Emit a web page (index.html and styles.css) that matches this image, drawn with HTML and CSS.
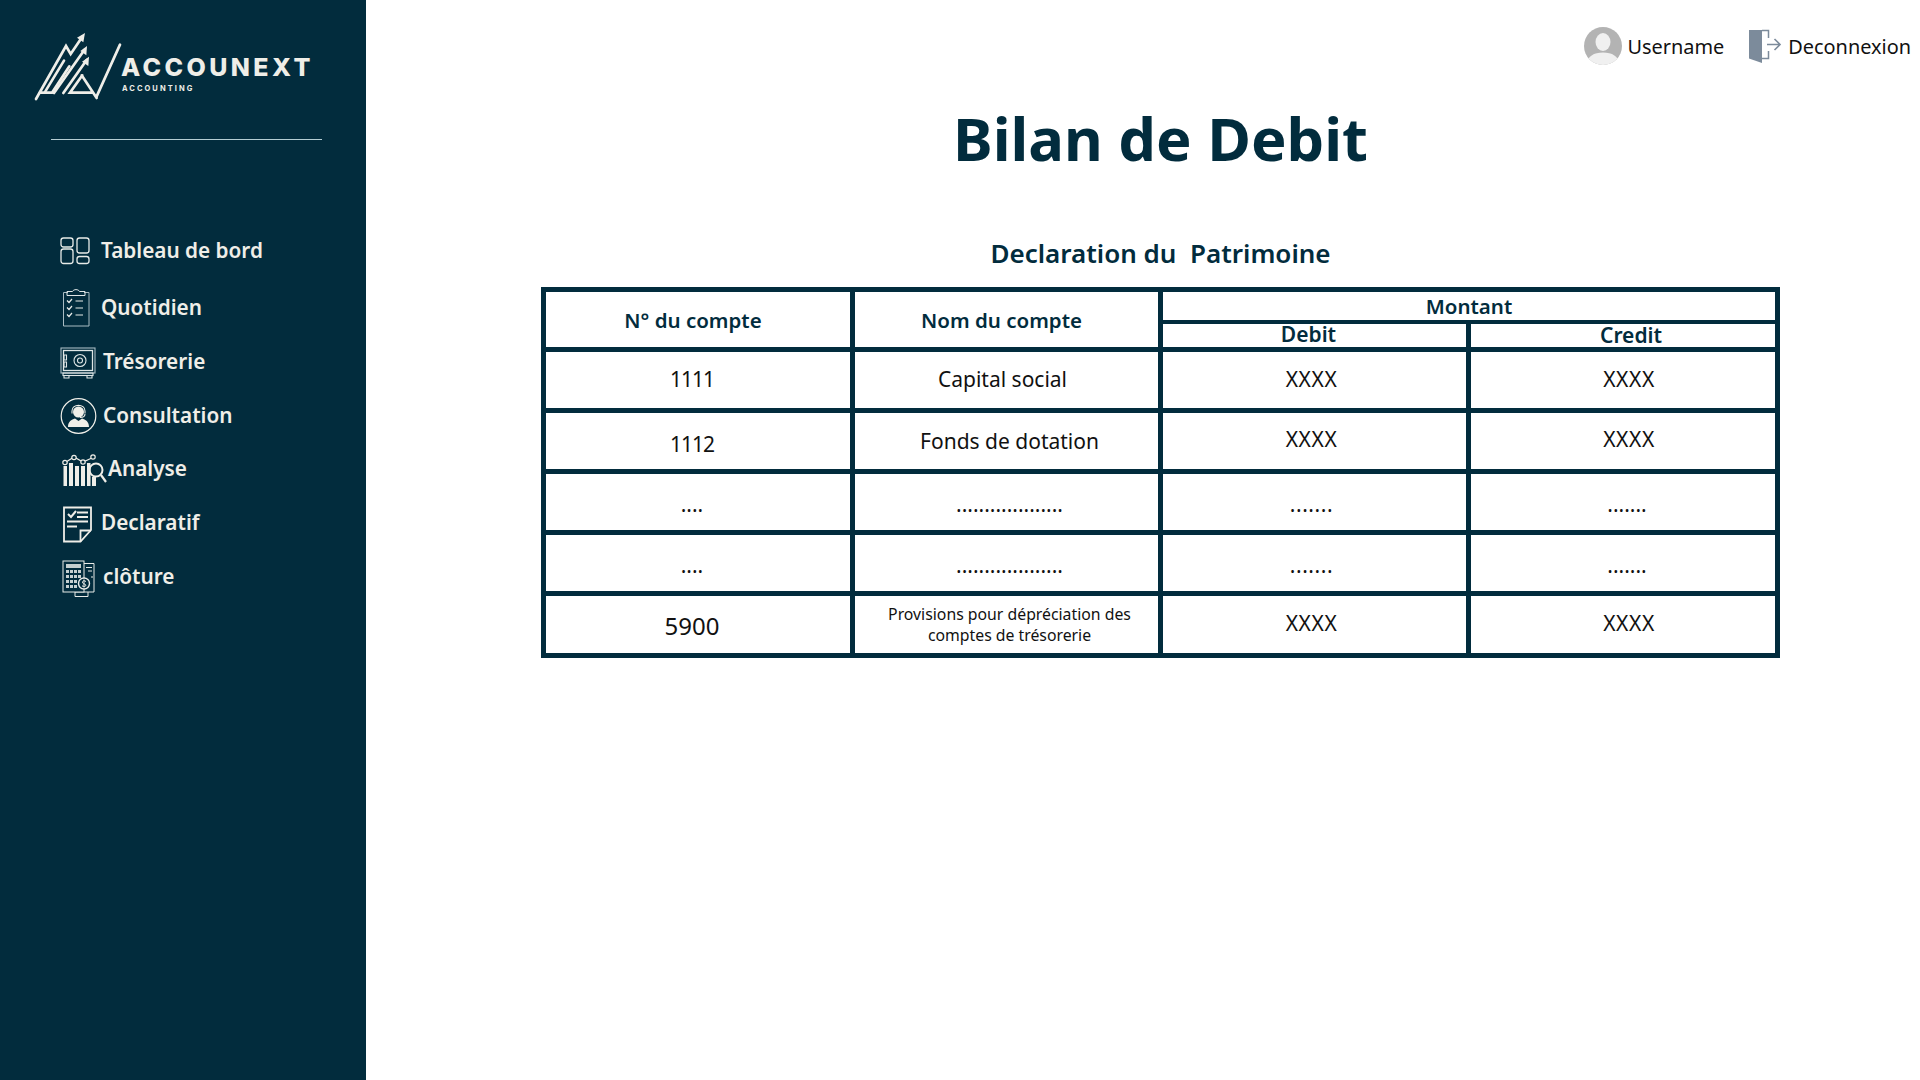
FILE: index.html
```html
<!DOCTYPE html>
<html lang="fr">
<head>
<meta charset="utf-8">
<title>Bilan de Debit</title>
<link rel="stylesheet" href="styles.css">
</head>
<body>
<div class="app">
  <aside class="sidebar">
    <div class="brand">
      <svg class="brand-mark" viewBox="0 0 300 234" fill="none" stroke="#efeee8" stroke-width="8" stroke-linecap="round" stroke-linejoin="miter">
        <path d="M270 50L200 205"/>
        <path d="M157 142L120 194H188M155 142L200 210" />
        <path d="M100 195L170 96"/>
        <path d="M72 195L163 66"/>
        <path d="M18 213L108 54L122 78L157 26"/>
        <path d="M30 194H66L118 115"/>
        <path d="M46 190L102 98"/>
        <path d="M165 15L141 29L160 43Z" fill="#efeee8" stroke="none"/>
        <path d="M171 54L151 69L169 82Z" fill="#efeee8" stroke="none"/>
        <path d="M177 86L156 101L175 114Z" fill="#efeee8" stroke="none"/>
      </svg>
      <div class="brand-text">
        <div class="brand-name">ACCOUNEXT</div>
        <div class="brand-sub">ACCOUNTING</div>
      </div>
    </div>
    <hr class="divider">
    <nav class="nav">
      <a class="nav-item">
        <svg class="nav-icon" viewBox="0 0 44 40" fill="none" stroke="#e8ebe8" stroke-width="1.3">
          <rect x="2" y="7" width="12" height="9" rx="2.5"/><rect x="2" y="18" width="12" height="14.5" rx="2.5"/><rect x="18" y="7" width="12" height="15" rx="2.5"/><rect x="18" y="25.5" width="12" height="7" rx="2.5"/>
        </svg>
        <span class="nav-label l-1">Tableau de bord</span>
      </a>
      <a class="nav-item">
        <svg class="nav-icon" viewBox="0 0 44 40" fill="none" stroke="#a9bcc3" stroke-width="1">
          <path d="M9 4.500H4.500V38H30V4.500H25"/><path d="M8 7.500V3.500H13.500C14.500 1 19.500 1 20.500 3.500H26V7.500Z" stroke="#dfe6e6"/>
          <g stroke="#e8ebe8" stroke-width="1.2"><path d="M8 12.500L10 14.500L13 11M8 19.500L10 21.500L13 18M8 26.500L10 28.500L13 25"/><path d="M16.500 13H24M16.500 20H24M16.500 27H24"/></g>
        </svg>
        <span class="nav-label l-2">Quotidien</span>
      </a>
      <a class="nav-item">
        <svg class="nav-icon" viewBox="0 0 44 40" fill="none" stroke="#dfe6e6" stroke-width="1.1">
          <rect x="2" y="6" width="34" height="25" stroke="#a9bcc3"/><rect x="4.500" y="8.500" width="29" height="20" stroke-width="1.300"/>
          <rect x="4" y="31" width="30" height="2.500"/><path d="M5 33.500V36H10V33.500M28 33.500V36H33V33.500"/>
          <circle cx="21" cy="18.500" r="6"/><circle cx="21" cy="18.500" r="2.500"/><path d="M5 13h2.500v5H5zM5 20h2.500v5H5z"/>
        </svg>
        <span class="nav-label l-3">Trésorerie</span>
      </a>
      <a class="nav-item">
        <svg class="nav-icon" viewBox="0 0 44 40" fill="none" stroke="#efeee8" stroke-width="1.200">
          <circle cx="19.500" cy="20" r="17.300"/>
          <circle cx="19.500" cy="16" r="5.500" fill="#efeee8" stroke="none"/>
          <path d="M13 17.500V15C13 7.500 26 7.500 26 15V17.500M26 18C26 20.500 24 21.500 21 21.500" stroke-width="1.100"/>
          <path d="M9 31C9 25.500 12.500 23.500 16 22.500L19.500 25L23 22.500C26.500 23.500 30 25.500 30 31Z" fill="#efeee8" stroke="none"/>
        </svg>
        <span class="nav-label l-4">Consultation</span>
      </a>
      <a class="nav-item">
        <svg class="nav-icon icon-wide" viewBox="-1 -1 48 40" fill="none" stroke="#efeee8" stroke-width="1.200">
          <path d="M6 11L14 6L23 11L33 6.500"/>
          <g fill="#022c3d"><circle cx="5" cy="11.500" r="2.200"/><circle cx="14" cy="6.500" r="2.200"/><circle cx="23" cy="11" r="2.200"/><circle cx="33" cy="6" r="2.200"/></g>
          <g fill="#efeee8" stroke="none"><rect x="3.500" y="15" width="3.500" height="20"/><rect x="9" y="12" width="4" height="23"/><rect x="15" y="15" width="4" height="20"/><rect x="21" y="15" width="4" height="20"/><rect x="27" y="12" width="3.500" height="23"/><rect x="32" y="26" width="4" height="9"/></g>
          <circle cx="36" cy="19" r="6.500" stroke-width="2"/><path d="M41 24L46 31" stroke-width="2.200"/>
        </svg>
        <span class="nav-label l-5">Analyse</span>
      </a>
      <a class="nav-item">
        <svg class="nav-icon" viewBox="-1 0 44 40" fill="none" stroke="#efeee8" stroke-width="1.800">
          <path d="M4 3.500H31V26L20.500 37.500H4Z"/><path d="M20.500 37.500V26.500H31"/>
          <path d="M8 10L11 13L16 7" stroke-width="2"/><path d="M17 8.500H28M17 13H28M7 17.500H28M7 22.500H17"/>
        </svg>
        <span class="nav-label l-6">Declaratif</span>
      </a>
      <a class="nav-item">
        <svg class="nav-icon" viewBox="-1 -1 44 40" fill="none" stroke="#e8ebe8" stroke-width="1">
          <path d="M24 4.500H34V33H15V37.500H28V33"/>
          <rect x="3" y="2" width="21" height="31" fill="#022c3d"/>
          <rect x="6" y="5" width="15" height="4" fill="#c6d0d0" stroke="none"/>
          <g fill="#c6d0d0" stroke="none"><rect x="6" y="11" width="3" height="3"/><rect x="10" y="11" width="3" height="3"/><rect x="14" y="11" width="3" height="3"/><rect x="18" y="11" width="3" height="3"/><rect x="6" y="16" width="3" height="3"/><rect x="10" y="16" width="3" height="3"/><rect x="14" y="16" width="3" height="3"/><rect x="18" y="16" width="3" height="3"/><rect x="6" y="21" width="3" height="3"/><rect x="10" y="21" width="3" height="3"/><rect x="14" y="21" width="3" height="3"/><rect x="6" y="26" width="3" height="3"/><rect x="10" y="26" width="3" height="3"/><rect x="14" y="26" width="3" height="3"/></g>
          <circle cx="24" cy="24.500" r="5.500" fill="#022c3d" stroke-width="1.400"/>
          <path d="M26 22.500C24 21 22 22 22.500 23.800C23 25 25.800 24.800 25.800 26.300C25.800 27.800 23.500 27.800 22 26.800M24 20.500V28.500"/>
          <path d="M26 8.500H32M28 12H32M31 18H33"/>
        </svg>
        <span class="nav-label l-7">clôture</span>
      </a>
    </nav>
  </aside>
  <main class="main">
    <header class="topbar">
      <div class="user">
        <svg class="avatar" viewBox="0 0 38 38">
          <defs><clipPath id="avatar-clip"><circle cx="19" cy="19" r="19"/></clipPath></defs>
          <circle cx="19" cy="19" r="19" fill="#b3b3b3"/>
          <g clip-path="url(#avatar-clip)" fill="#f0f0f0"><ellipse cx="19" cy="15" rx="7.500" ry="9"/><path d="M3 38C3 29 10 25.500 19 25.500C28 25.500 35 29 35 38Z"/></g>
        </svg>
        <span>Username</span>
      </div>
      <div class="logout">
        <svg class="door" viewBox="0 0 34 34" fill="none">
          <path d="M1 1H14V34L1 29.500Z" fill="#7c8b9b"/>
          <path d="M14 1.500H20.500V9M20.500 22V29.500H14" stroke="#7c8b9b" stroke-width="1.500"/>
          <path d="M19 15.500H32M26.500 10L32 15.500L26.500 21" stroke="#7c8b9b" stroke-width="1.600"/>
        </svg>
        <span>Deconnexion</span>
      </div>
    </header>
    <section class="content">
      <h1 class="title">Bilan de Debit</h1>
      <h2 class="subtitle">Declaration du&nbsp; Patrimoine</h2>
      <table class="ledger">
        <colgroup><col class="c1"><col class="c2"><col class="c3"><col class="c4"></colgroup>
        <thead>
          <tr class="h1row">
            <th rowspan="2" class="col-head">N° du compte</th>
            <th rowspan="2" class="col-head">Nom du compte</th>
            <th colspan="2" class="montant">Montant</th>
          </tr>
          <tr class="h2row">
            <th class="sub-h debit">Debit</th>
            <th class="sub-h credit">Credit</th>
          </tr>
        </thead>
        <tbody>
          <tr class="r1"><td class="first num">1111</td><td class="name-left">Capital social</td><td class="amt-d">XXXX</td><td class="amt-c">XXXX</td></tr>
          <tr class="r2"><td class="first num drop">1112</td><td class="name-right lift-small">Fonds de dotation</td><td class="amt-d">XXXX</td><td class="amt-c">XXXX</td></tr>
          <tr class="dots"><td class="first">....</td><td class="name-right">...................</td><td class="amt-d">.......</td><td class="dot-c">.......</td></tr>
          <tr class="dots"><td class="first">....</td><td class="name-right">...................</td><td class="amt-d">.......</td><td class="dot-c">.......</td></tr>
          <tr class="r5"><td class="first big">5900</td><td class="small name-right">Provisions pour dépréciation des<br>comptes de trésorerie</td><td class="amt-d">XXXX</td><td class="amt-c">XXXX</td></tr>
        </tbody>
      </table>
    </section>
  </main>
</div>
</body>
</html>
```

FILE: styles.css
```css
* { box-sizing: border-box; }
html, body { margin: 0; height: 100%; }
body { font-family: "Noto Sans", "Liberation Sans", sans-serif; background: #fff; color: #111; }

.app { display: flex; height: 1080px; overflow: hidden; }

.sidebar { width: 366px; flex: none; background: #022c3d; color: #efeee8; padding-top: 33px; }
.brand { display: flex; height: 78px; padding-left: 30px; }
.brand-mark { width: 100px; height: 78px; flex: none; margin-top: -5px; margin-right: -7px; }
.brand-text { padding-top: 21px; margin-left: -2px; }
.brand-name { font-family: Inter, sans-serif; font-weight: 800; font-size: 25px; line-height: 26px; letter-spacing: 3.4px; }
.brand-sub { font-family: Inter, sans-serif; font-weight: 700; font-size: 7.500px; line-height: 9px; letter-spacing: 2.05px; margin-top: 4px; margin-left: 1px; }

.divider { margin: 28px 44px 0 51px; border: 0; height: 1px; background: #b5cdd3; }

.nav { display: flex; flex-direction: column; margin-top: 84px; padding-left: 59px; }
.nav-item { display: flex; align-items: center; height: 54px; }
.nav-item:first-child { margin-bottom: 3px; }
.nav-icon { width: 44px; height: 40px; flex: none; }
.icon-wide { width: 48px; }
.nav-label { font-weight: 600; font-size: 20.750px; line-height: 28px; color: #efeee8; white-space: nowrap; margin-bottom: 3px; }
.l-1, .l-2, .l-6 { margin-left: -2px; }
.l-3, .l-4, .l-7 { margin-left: 0; }
.l-5 { margin-left: 1px; }
.l-5, .l-6, .l-7 { margin-bottom: 5px; }

.main { flex: 1; min-width: 0; }
.topbar { display: flex; justify-content: flex-end; align-items: center; padding: 27px 9px 0 0; height: 65px; font-size: 19.900px; color: #111; }
.user, .logout { display: flex; align-items: center; }
.avatar { width: 38px; height: 38px; margin-right: 6px; }
.logout { margin-left: 24px; }
.door { width: 34px; height: 34px; margin-right: 6px; }

.content { padding: 0 140px 0 175px; }
.title { margin: 33px 0 0; font-size: 59.700px; line-height: 80px; font-weight: 700; color: #022c3d; text-align: center; }
.subtitle { margin: 57px 0 0; font-size: 26px; line-height: 36px; font-weight: 600; color: #022c3d; text-align: center; }

.ledger { margin-top: 16px; width: 1239px; table-layout: fixed; border-collapse: collapse; border: 5px solid #022c3d; }
.c1 { width: 309px; } .c2 { width: 308px; } .c3 { width: 308px; } .c4 { width: 309px; }
.ledger th, .ledger td { border: 5px solid #022c3d; padding: 0; text-align: center; vertical-align: middle; font-size: 20.500px; }
.ledger th { color: #022c3d; font-weight: 600; }
.ledger td { color: #111; height: 61px; font-size: 21px; }
.h1row { height: 32px; }
.h2row { height: 28px; }
.r5 td { height: 62px; }

.ledger .montant { border-bottom-width: 4px; line-height: 24px; }
.ledger .sub-h { line-height: 20px; border-top-width: 4px; font-size: 21px; }
.ledger .col-head { padding-right: 10px; }
.ledger .debit { border-right-width: 3px; padding: 0 12px 2px 0; }
.ledger .credit { padding: 0 0 0 16px; }

.ledger .first { padding: 0 12px 3px 0; }
.ledger .num { letter-spacing: -1px; }
.ledger .drop { padding-bottom: 0; padding-top: 6px; }
.ledger .name-left { padding: 0 8px 3px 0; }
.ledger .name-right { padding: 0 0 3px 6px; }
.ledger .lift-small { padding-bottom: 0; }
.ledger .amt-d { padding: 0 6px 3px 0; letter-spacing: 0.6px; }
.ledger .amt-c { padding: 0 0 3px 12px; letter-spacing: 0.6px; }
.ledger .dot-c { padding: 0 0 3px 8px; }
.ledger .r2 .amt-d, .ledger .r2 .amt-c { padding-bottom: 5px; }

.ledger .dots td { padding-top: 3px; padding-bottom: 0; }
.ledger .r5 .big { font-size: 24px; padding: 1px 12px 0 0; }
.ledger .r5 .small { font-size: 15.800px; line-height: 21px; padding-bottom: 0; }
.ledger .r5 .amt-d, .ledger .r5 .amt-c { padding-bottom: 4px; }
```
